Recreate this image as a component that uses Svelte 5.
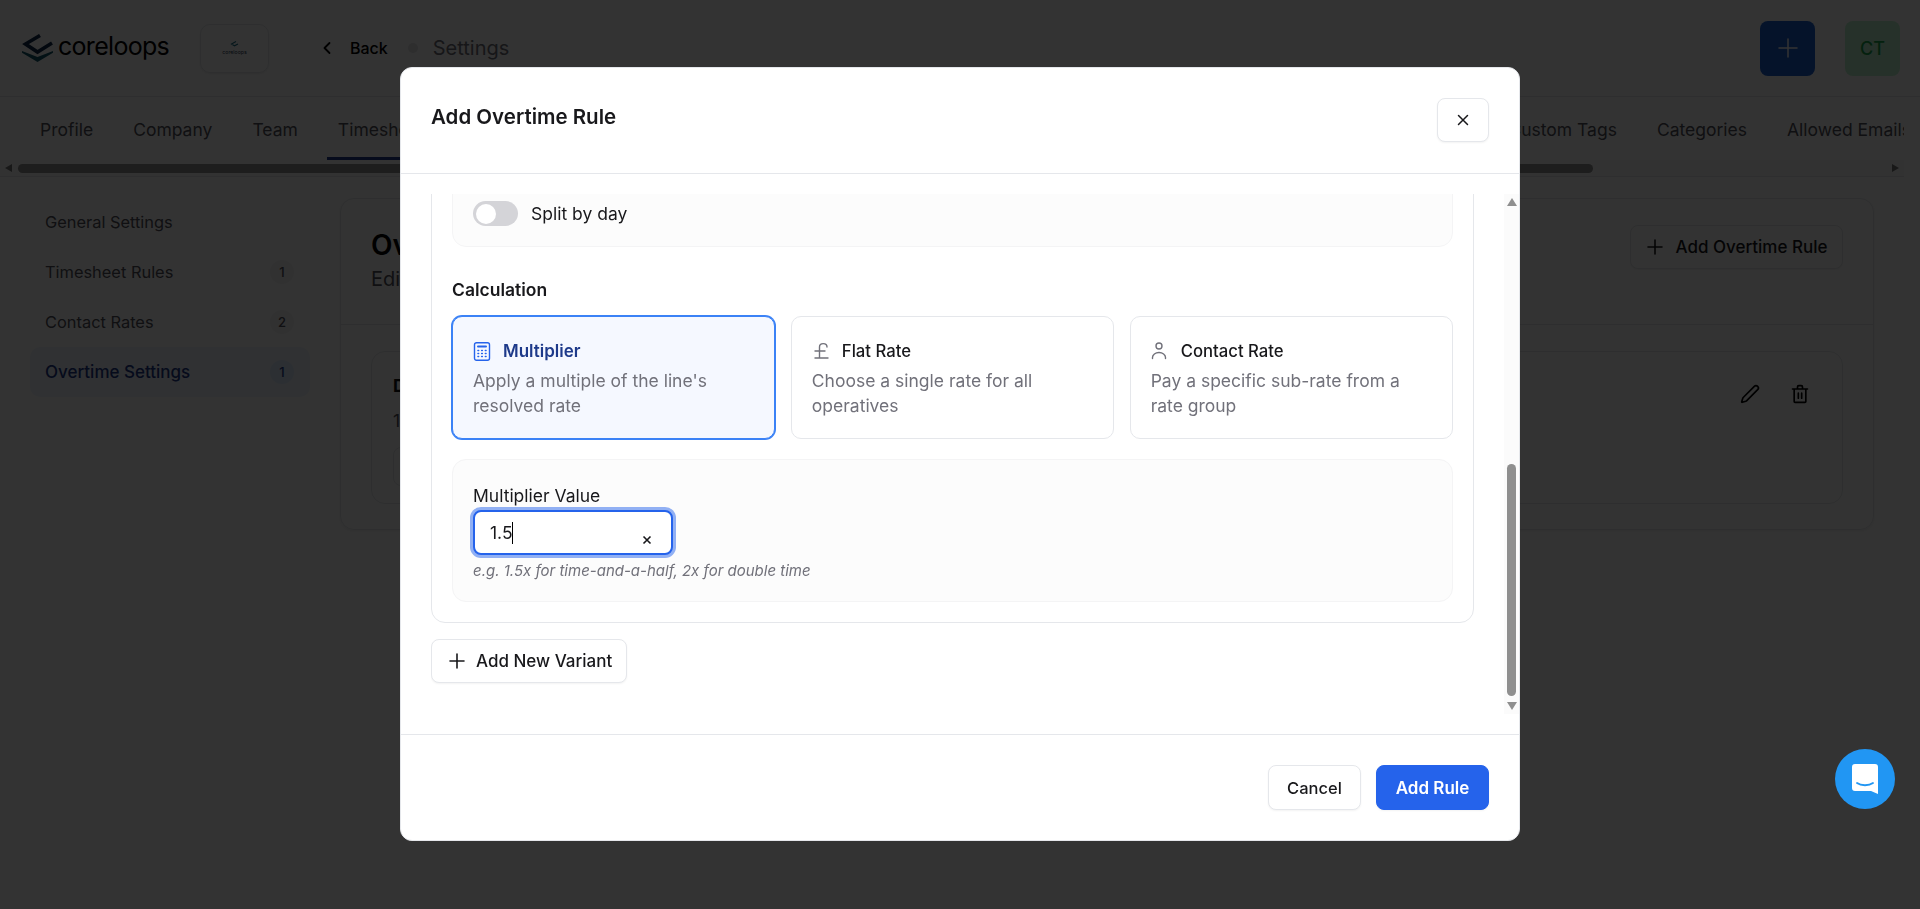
<script>
  const tabsLeft = ["Profile", "Company", "Team", "Timesheets"];
  const tabsRight = ["Custom Tags", "Categories", "Allowed Emails"];
  const sideItems = [
    { label: "General Settings" },
    { label: "Timesheet Rules", count: 1 },
    { label: "Contact Rates", count: 2 },
    { label: "Overtime Settings", count: 1, active: true }
  ];
</script>

<div class="page">
  <header class="topbar">
    <div class="logo">
      <svg width="32" height="29" viewBox="0 0 32 29" fill="none">
        <path d="M18 1.5 3.5 10l12 8L30 9" stroke="#0f2a4a" stroke-width="3.6" />
        <path d="M0 17l15.5 6L31 17v1.8l-15.5 9.2L0 18.8z" fill="#12586b" />
      </svg>
      <span>coreloops</span>
    </div>
    <div class="org">
      <svg width="9" height="7" viewBox="0 0 9 7" fill="none">
        <path d="M6 .5 1.5 3l3 1.8L8 3" stroke="#1c6f86" stroke-width="1.1" />
      </svg>
      <span>coreloops</span>
    </div>
    <nav class="crumbs">
      <svg width="20" height="20" viewBox="0 0 24 24" fill="none" stroke="#000" stroke-width="2.2" stroke-linecap="round" stroke-linejoin="round">
        <path d="m15 18-6-6 6-6" />
      </svg>
      <span class="back">Back</span>
      <i class="dot"></i>
      <span class="crumb">Settings</span>
    </nav>
    <button class="add-square" aria-label="Add">
      <svg width="22" height="22" viewBox="0 0 22 22" fill="none" stroke="#fff" stroke-width="1.5" stroke-linecap="round">
        <path d="M11 2v18M2 11h18" />
      </svg>
    </button>
    <div class="avatar">CT</div>
  </header>

  <div class="tabs">
    <div class="tab-row">
      {#each tabsLeft as tab}
        <span class="tab" class:on={tab === "Timesheets"}>{tab}</span>
      {/each}
      <div class="tabs-end">
        {#each tabsRight as tab}
          <span class="tab">{tab}</span>
        {/each}
      </div>
    </div>
    <div class="hbar">
      <i class="arr-l"></i>
      <div class="hthumb"></div>
      <i class="arr-r"></i>
    </div>
  </div>

  <div class="content">
    <aside class="side">
      {#each sideItems as item}
        <div class="side-item" class:active={item.active}>
          <span>{item.label}</span>
          {#if item.count}<b>{item.count}</b>{/if}
        </div>
      {/each}
    </aside>
    <main class="card">
      <div class="card-head">
        <div>
          <h1>Overtime Settings</h1>
          <p>Edit overtime rules</p>
        </div>
        <button class="btn head-btn">
          <svg width="18" height="18" viewBox="0 0 18 18" fill="none" stroke="currentColor" stroke-width="1.6" stroke-linecap="round">
            <path d="M9 2v14M2 9h14" />
          </svg>
          Add Overtime Rule
        </button>
      </div>
      <div class="card-body">
        <div class="rule">
          <div class="rule-text">
            <strong>Default</strong>
            <p>1.5x</p>
            <div class="rule-chip"></div>
          </div>
          <div class="rule-actions">
            <svg width="20" height="20" viewBox="0 0 24 24" fill="none" stroke="#000" stroke-width="2" stroke-linecap="round" stroke-linejoin="round">
              <path d="M21.174 6.812a1 1 0 0 0-3.986-3.987L3.842 16.174a2 2 0 0 0-.5.83l-1.321 4.352a.5.5 0 0 0 .623.622l4.353-1.32a2 2 0 0 0 .83-.497z" />
            </svg>
            <svg width="20" height="20" viewBox="0 0 24 24" fill="none" stroke="#000" stroke-width="2" stroke-linecap="round" stroke-linejoin="round">
              <path d="M3 6h18M19 6v15a1 1 0 0 1-1 1H6a1 1 0 0 1-1-1V6M9 6V3.5A1.5 1.5 0 0 1 10.500 2h3A1.500 1.500 0 0 1 15 3.500V6M10 11v6M14 11v6" />
            </svg>
          </div>
        </div>
      </div>
    </main>
  </div>
</div>

<div class="overlay">
  <div class="modal">
    <div class="modal-head">
      <h2>Add Overtime Rule</h2>
      <button class="btn close" aria-label="Close">
        <svg width="18" height="18" viewBox="0 0 24 24" fill="none" stroke="#18181b" stroke-width="2" stroke-linecap="round">
          <path d="M18 6 6 18M6 6l12 12" />
        </svg>
      </button>
    </div>

    <div class="modal-body">
      <div class="scroll">
        <div class="scroll-inner">
          <section class="variant">
            <div class="panel split">
              <span class="switch"><i></i></span>
              <span>Split by day</span>
            </div>

            <div class="calc-label">Calculation</div>
            <div class="options">
              <div class="option selected">
                <div class="option-title">
                  <svg width="20" height="20" viewBox="0 0 20 20" fill="none" stroke="#2563eb" stroke-width="1.4" stroke-linecap="round">
                    <rect x="1.500" y="0.700" width="15" height="17.600" rx="2" />
                    <path d="M5 4.500h8" stroke-width="2" />
                    <path d="M5 8.500h.6M8.700 8.500h.6M12.400 8.500h.6M5 11.500h.6M8.700 11.500h.6M12.400 11.500h.6M5 14.500h.6M8.700 14.500h.6M12.400 14.500h.6" stroke-width="1.600" />
                  </svg>
                  Multiplier
                </div>
                <p>Apply a multiple of the line's resolved rate</p>
              </div>
              <div class="option">
                <div class="option-title">
                  <svg width="20" height="20" viewBox="0 0 20 20" fill="none" stroke="#71717a" stroke-width="1.400" stroke-linecap="round">
                    <path d="M15 5C15 .5 7.500 .5 7.500 5v11M3 16h13M3 9h10" />
                  </svg>
                  Flat Rate
                </div>
                <p>Choose a single rate for all operatives</p>
              </div>
              <div class="option">
                <div class="option-title">
                  <svg width="20" height="20" viewBox="0 0 20 20" fill="none" stroke="#71717a" stroke-width="1.400" stroke-linecap="round">
                    <circle cx="8" cy="4" r="3" />
                    <path d="M1.500 16.500v-1a6.500 5 0 0 1 13 0v1" />
                  </svg>
                  Contact Rate
                </div>
                <p>Pay a specific sub-rate from a rate group</p>
              </div>
            </div>

            <div class="panel value">
              <label for="mult">Multiplier Value</label>
              <div class="input">
                <span id="mult">1.5</span><i class="caret"></i>
                <svg width="10" height="10" viewBox="0 0 10 10" fill="none" stroke="#18181b" stroke-width="1.6">
                  <path d="M1.500 1.500l7 7M8.500 1.500l-7 7" />
                </svg>
              </div>
              <em>e.g. 1.5x for time-and-a-half, 2x for double time</em>
            </div>
          </section>

          <button class="btn variant-btn">
            <svg width="18" height="18" viewBox="0 0 18 18" fill="none" stroke="currentColor" stroke-width="1.6" stroke-linecap="round">
              <path d="M9 2v14M2 9h14" />
            </svg>
            Add New Variant
          </button>
        </div>
      </div>
      <div class="vbar">
        <i class="arr-u"></i>
        <div class="vtrack"><div class="vthumb"></div></div>
        <i class="arr-d"></i>
      </div>
    </div>

    <div class="modal-foot">
      <button class="btn cancel">Cancel</button>
      <button class="btn primary">Add Rule</button>
    </div>
  </div>
</div>

<button class="chat" aria-label="Chat">
  <svg width="26" height="30" viewBox="0 0 26 30">
    <path d="M3 0h20a3 3 0 0 1 3 3v27l-7-3H3a3 3 0 0 1-3-3V3a3 3 0 0 1 3-3z" fill="#fff" />
    <path d="M5 19c4 3 12 3 16 0" fill="none" stroke="#2196f3" stroke-width="1.800" stroke-linecap="round" />
  </svg>
</button>

<style>
  :global(body) {
    margin: 0;
    background: #fff;
    font-family: Inter, "Liberation Sans", sans-serif;
    overflow: hidden;
  }

  .page {
    height: 909px;
    overflow: hidden;
    color: #111;
  }

  button {
    font-family: inherit;
  }

  .topbar {
    height: 97px;
    box-sizing: border-box;
    border-bottom: 1px solid #e5e7eb;
    display: flex;
    align-items: center;
    padding: 0 20px;
  }

  .logo {
    display: flex;
    align-items: center;
    gap: 4px;
    width: 180px;
  }

  .logo svg {
    margin-left: 2px;
  }

  .logo span {
    font-size: 25px;
    font-weight: 400;
    letter-spacing: -0.7px;
    color: #000;
    margin-top: -4px;
  }

  .org {
    width: 69px;
    height: 49px;
    box-sizing: border-box;
    border: 1px solid #e5e7eb;
    border-radius: 10px;
    display: flex;
    flex-direction: column;
    align-items: center;
    justify-content: center;
    gap: 1px;
    font-size: 5.2px;
    line-height: 6px;
    color: #1c3550;
    box-shadow: 0 1px 2px rgba(0, 0, 0, 0.08);
  }

  .crumbs {
    display: flex;
    align-items: center;
    margin-left: 48px;
    flex: 1;
    font-size: 18px;
  }

  .back {
    margin-left: 13px;
    font-size: 16px;
    font-weight: 500;
    color: #000;
  }

  .dot {
    width: 10px;
    height: 10px;
    border-radius: 50%;
    background: #e4e4e7;
    margin: 0 15px 0 20px;
  }

  .crumb {
    font-size: 20px;
    color: #71717a;
  }

  .add-square {
    width: 55px;
    height: 55px;
    border: 0;
    border-radius: 8px;
    background: #1a5fd0;
    display: flex;
    align-items: center;
    justify-content: center;
  }

  .avatar {
    width: 55px;
    height: 55px;
    margin-left: 30px;
    border-radius: 8px;
    background: #bdf5cf;
    color: #16a34a;
    display: flex;
    align-items: center;
    justify-content: center;
    font-size: 18px;
    font-weight: 500;
  }

  .tabs {
    height: 80px;
    box-sizing: border-box;
    margin-right: 16px;
    border-bottom: 1px solid #e5e7eb;
    overflow: hidden;
  }

  .tab-row {
    height: 63px;
    box-sizing: border-box;
    display: flex;
    padding-left: 29px;
    gap: 18px;
  }

  .tab {
    padding: 22px 11px 0;
    height: 63px;
    box-sizing: border-box;
    font-size: 17.5px;
    color: #52525b;
    white-space: nowrap;
  }

  .tab.on {
    border-bottom: 3px solid #1e3a8a;
  }

  .tabs-end {
    margin-left: auto;
    margin-right: -18px;
    display: flex;
    gap: 18px;
  }

  .hbar {
    height: 16px;
    display: flex;
    align-items: center;
    background: #fafafa;
  }

  .hthumb {
    width: 1575px;
    height: 9px;
    margin-left: 6px;
    border-radius: 5px;
    background: #8f8f8f;
  }

  .arr-l,
  .arr-r,
  .arr-u,
  .arr-d {
    width: 0;
    height: 0;
    display: block;
  }

  .arr-l {
    margin-left: 5px;
    border: 4.5px solid transparent;
    border-left: 0;
    border-right: 7px solid #777;
  }

  .arr-r {
    margin-left: auto;
    margin-right: 5px;
    border: 4.5px solid transparent;
    border-right: 0;
    border-left: 7px solid #777;
  }

  .content {
    display: flex;
    padding: 21px 46px 0 30px;
  }

  .side {
    width: 280px;
    flex-shrink: 0;
    margin: -1px 30px 0 0;
  }

  .side-item {
    height: 50px;
    box-sizing: border-box;
    padding: 0 16px 0 15px;
    display: flex;
    align-items: center;
    justify-content: space-between;
    border-radius: 10px;
    font-size: 16.4px;
    color: #52525b;
  }

  .side-item b {
    width: 24px;
    height: 24px;
    border-radius: 50%;
    background: #f4f4f5;
    display: flex;
    align-items: center;
    justify-content: center;
    font-size: 13px;
    font-weight: 500;
  }

  .side-item.active {
    background: #eff6ff;
    color: #1e3a8a;
    font-size: 17px;
    font-weight: 500;
  }

  .side-item.active b {
    background: #dbeafe;
  }

  .card {
    flex: 1;
    height: 332px;
    box-sizing: border-box;
    border: 1px solid #e5e7eb;
    border-radius: 14px;
    box-shadow: 0 1px 3px rgba(0, 0, 0, 0.08);
  }

  .card-head {
    height: 126px;
    box-sizing: border-box;
    border-bottom: 1px solid #e5e7eb;
    padding: 26px 30px 0;
    display: flex;
    justify-content: space-between;
    align-items: flex-start;
  }

  h1 {
    margin: 0;
    font-size: 28px;
    font-weight: 600;
    line-height: 40px;
    color: #000;
  }

  .card-head p {
    margin: 2px 0 0;
    font-size: 20px;
    color: #52525b;
  }

  .card-body {
    padding: 26px 30px;
  }

  .rule {
    height: 153px;
    box-sizing: border-box;
    border: 1px solid #e5e7eb;
    border-radius: 14px;
    padding: 22px 21px;
    display: flex;
    justify-content: space-between;
  }

  .rule-text strong {
    display: block;
    font-size: 17.5px;
    line-height: 24px;
  }

  .rule-text p {
    margin: 11px 0 0;
    font-size: 17.5px;
    line-height: 24px;
    color: #52525b;
  }

  .rule-chip {
    width: 130px;
    height: 37px;
    margin-top: 14px;
    border: 1px solid #e5e7eb;
    border-radius: 8px;
  }

  .rule-actions {
    display: flex;
    gap: 30px;
    padding: 10px 11px 0 0;
  }

  .btn {
    box-sizing: border-box;
    border: 1px solid #e5e7eb;
    border-radius: 8px;
    background: #fff;
    box-shadow: 0 1px 2px rgba(0, 0, 0, 0.05);
    color: #18181b;
    font-size: 17px;
    font-weight: 500;
    display: flex;
    align-items: center;
    justify-content: center;
  }

  .head-btn {
    width: 213px;
    height: 44px;
    gap: 12px;
  }

  .overlay {
    position: fixed;
    inset: 0;
    background: rgba(0, 0, 0, 0.8);
    display: flex;
    justify-content: center;
    padding-top: 67px;
  }

  .modal {
    width: 1120px;
    height: 774px;
    box-sizing: border-box;
    background: #fff;
    border: 1px solid #e5e7eb;
    border-radius: 12px;
    display: flex;
    flex-direction: column;
    overflow: hidden;
  }

  .modal-head {
    height: 106px;
    flex-shrink: 0;
    box-sizing: border-box;
    border-bottom: 1px solid #e5e7eb;
    padding: 30px 30px 0;
    display: flex;
    justify-content: space-between;
    align-items: flex-start;
  }

  h2 {
    margin: 0;
    font-size: 20.5px;
    font-weight: 600;
    line-height: 38px;
    color: #18181b;
  }

  .close {
    width: 52px;
    height: 44px;
  }

  .modal-body {
    flex: 1;
    min-height: 0;
    padding: 20px 0 20px 30px;
    display: flex;
  }

  .scroll {
    flex: 1;
    overflow: hidden;
    padding-right: 30px;
  }

  .scroll-inner {
    margin-top: -35px;
  }

  .variant {
    border: 1px solid #e5e7eb;
    border-radius: 14px;
    padding: 20px;
  }

  .panel {
    background: #fcfcfc;
    border: 1px solid #f4f4f5;
    border-radius: 14px;
  }

  .split {
    height: 67px;
    box-sizing: border-box;
    padding: 20px 20px 0;
    display: flex;
    align-items: flex-start;
    gap: 13px;
    font-size: 17.5px;
    line-height: 25px;
    color: #18181b;
  }

  .switch {
    width: 45px;
    height: 25px;
    border-radius: 13px;
    background: #d4d4d8;
    position: relative;
  }

  .switch i {
    position: absolute;
    left: 3px;
    top: 2.5px;
    width: 20px;
    height: 20px;
    border-radius: 50%;
    background: #fff;
  }

  .calc-label {
    margin: 31px 0 14px;
    font-size: 17.5px;
    line-height: 24px;
    font-weight: 600;
    color: #18181b;
  }

  .options {
    display: grid;
    grid-template-columns: repeat(3, 1fr);
    gap: 15.5px;
  }

  .option {
    height: 123px;
    box-sizing: border-box;
    border: 1px solid #e5e7eb;
    border-radius: 10px;
    padding: 22px 20px 0;
  }

  .option.selected {
    border-color: #3b82f6;
    box-shadow: 0 0 0 1px #3b82f6;
    background: #f5f8ff;
  }

  .option-title {
    display: flex;
    align-items: center;
    gap: 10px;
    font-size: 16.7px;
    font-weight: 500;
    line-height: 25px;
    color: #18181b;
  }

  .selected .option-title {
    color: #1e3a8a;
    font-size: 17px;
    font-weight: 600;
  }

  .option p {
    margin: 4px 0 0;
    font-size: 17.5px;
    line-height: 25px;
    color: #71717a;
  }

  .value {
    margin-top: 20px;
    height: 143px;
    box-sizing: border-box;
    padding: 24px 20px 0;
  }

  .value label {
    display: block;
    font-size: 17.5px;
    line-height: 24px;
    color: #18181b;
  }

  .input {
    width: 200px;
    height: 45px;
    box-sizing: border-box;
    margin-top: 2px;
    border: 2px solid #2563eb;
    border-radius: 8px;
    box-shadow: 0 0 0 3px rgba(37, 99, 235, 0.5);
    background: #fff;
    display: flex;
    align-items: center;
    padding-left: 15px;
    font-size: 17.5px;
    color: #18181b;
    position: relative;
  }

  .caret {
    width: 1px;
    height: 22px;
    margin-left: -1px;
    background: #000;
  }

  .input svg {
    position: absolute;
    right: 19px;
    top: 23px;
  }

  .value em {
    display: block;
    margin-top: 6px;
    font-size: 15px;
    line-height: 20px;
    color: #71717a;
  }

  .variant-btn {
    margin-top: 16px;
    width: 196px;
    height: 44px;
    gap: 10px;
    justify-content: flex-start;
    padding: 0 0 0 16px;
  }

  .vbar {
    width: 15px;
    background: #fbfbfb;
    display: flex;
    flex-direction: column;
    align-items: center;
  }

  .arr-u {
    margin-top: 4px;
    border: 5px solid transparent;
    border-top: 0;
    border-bottom: 8px solid #8f8f8f;
  }

  .arr-d {
    margin-bottom: 4px;
    border: 5px solid transparent;
    border-bottom: 0;
    border-top: 8px solid #8f8f8f;
  }

  .vtrack {
    flex: 1;
    display: flex;
    align-items: flex-end;
    padding-bottom: 6px;
  }

  .vthumb {
    width: 9px;
    height: 232px;
    border-radius: 5px;
    background: #8f8f8f;
  }

  .modal-foot {
    height: 106px;
    flex-shrink: 0;
    box-sizing: border-box;
    border-top: 1px solid #e5e7eb;
    padding: 30px 30px 0;
    display: flex;
    justify-content: flex-end;
    align-items: flex-start;
    gap: 15px;
  }

  .cancel {
    width: 93px;
    height: 45px;
    font-size: 16.5px;
  }

  .primary {
    width: 113px;
    height: 45px;
    border-color: #2563eb;
    background: #2563eb;
    color: #fff;
    font-weight: 600;
  }

  .chat {
    position: fixed;
    left: 1835px;
    top: 749px;
    width: 60px;
    height: 60px;
    border: 0;
    border-radius: 50%;
    background: #2196f3;
    display: flex;
    align-items: center;
    justify-content: center;
    padding: 0;
  }
</style>
